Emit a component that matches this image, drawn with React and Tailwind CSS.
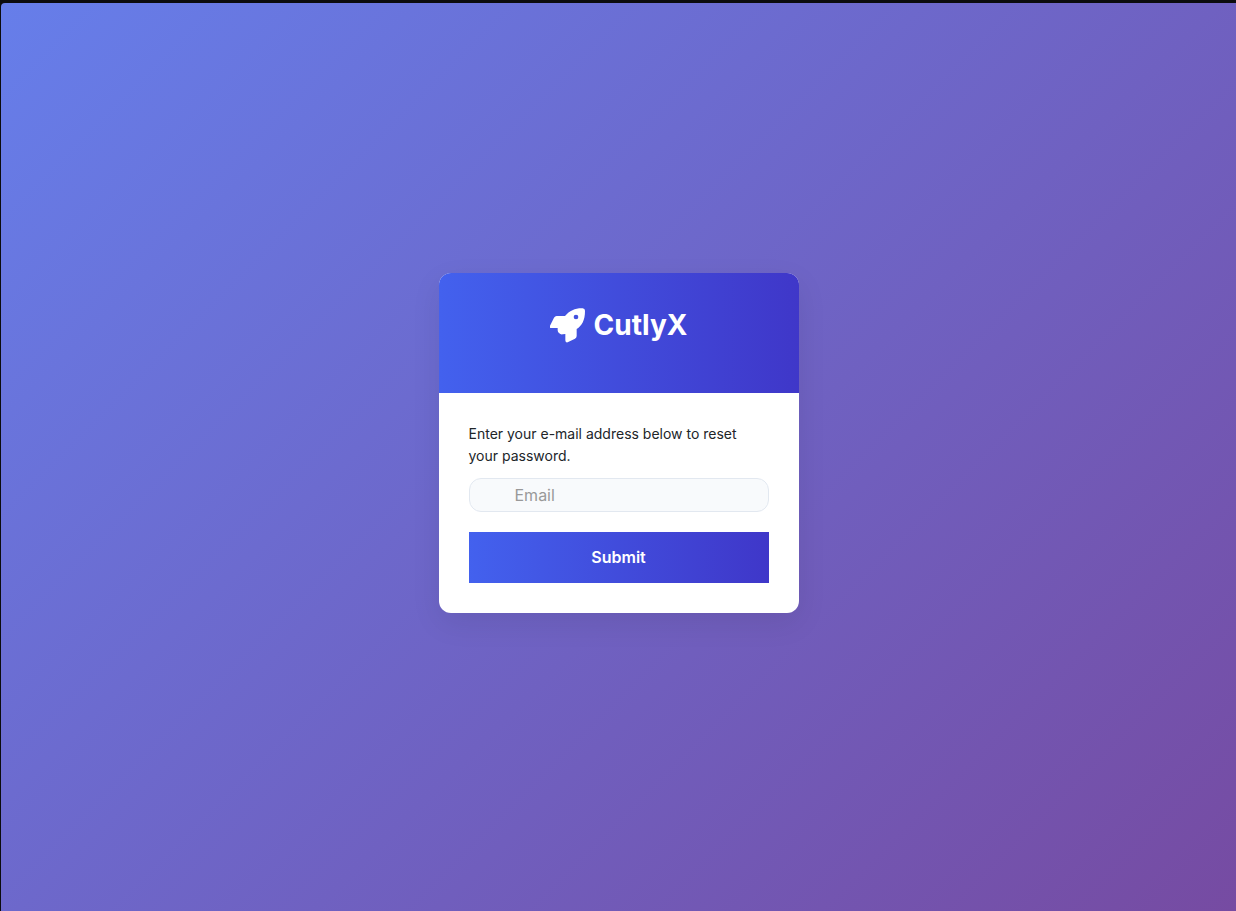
import { useState } from "react";

function RocketIcon({ className }) {
  return (
    <svg viewBox="14 12 108 108" className={className} fill="currentColor" aria-hidden="true">
      <path
        fillRule="evenodd"
        d="M112 16C91 15 73 23 59 39H34Q29 39 26 44L14 68Q11 75 18 75H37V82Q37 86 40 89L45 93Q48 95 52 94L60 93V112Q60 120 67 118L89 107Q94 104 94 99V78C110 67 119 52 119 23Q119 17 112 16ZM92 35A7 7 0 1 1 92 49A7 7 0 1 1 92 35Z"
      />
    </svg>
  );
}

export default function ResetPassword() {
  const [email, setEmail] = useState("");

  const handleSubmit = (e) => {
    e.preventDefault();
  };

  return (
    <div className="min-h-screen flex flex-col bg-[#0c0c0e] pt-[3px] pl-px font-['Inter',sans-serif]">
      <main className="grow flex items-center justify-center pb-7 rounded-tl-sm bg-[linear-gradient(135deg,#667eea_0%,#764ba2_100%)]">
        <div className="w-full max-w-[360px] rounded-xl overflow-hidden bg-white shadow-[0_10px_30px_rgba(0,0,0,0.08)]">
          <header className="px-[30px] pt-[30px] pb-[46px] bg-[linear-gradient(to_right,#4361ee,#3f37c9)] text-white">
            <h1 className="flex items-center justify-center gap-2 h-11 text-[28px] font-bold">
              <RocketIcon className="size-9" />
              CutlyX
            </h1>
          </header>

          <form onSubmit={handleSubmit} className="p-[30px]">
            <label
              htmlFor="email"
              className="block mb-[11px] text-sm leading-[22px] text-[#212529]"
            >
              Enter your e-mail address below to reset your password.
            </label>

            <input
              id="email"
              type="email"
              placeholder="Email"
              value={email}
              onChange={(e) => setEmail(e.target.value)}
              className="block w-full h-[34px] pl-[45px] pr-4 mb-5 rounded-xl border border-[#e2e8f0] bg-[#f8fafc] text-base text-[#212529] placeholder:text-[#999999] outline-none"
            />

            <button
              type="submit"
              className="block w-full pt-[13px] pb-[14px] bg-[linear-gradient(to_right,#4361ee,#3f37c9)] text-base font-semibold text-white cursor-pointer"
            >
              Submit
            </button>
          </form>
        </div>
      </main>
    </div>
  );
}
